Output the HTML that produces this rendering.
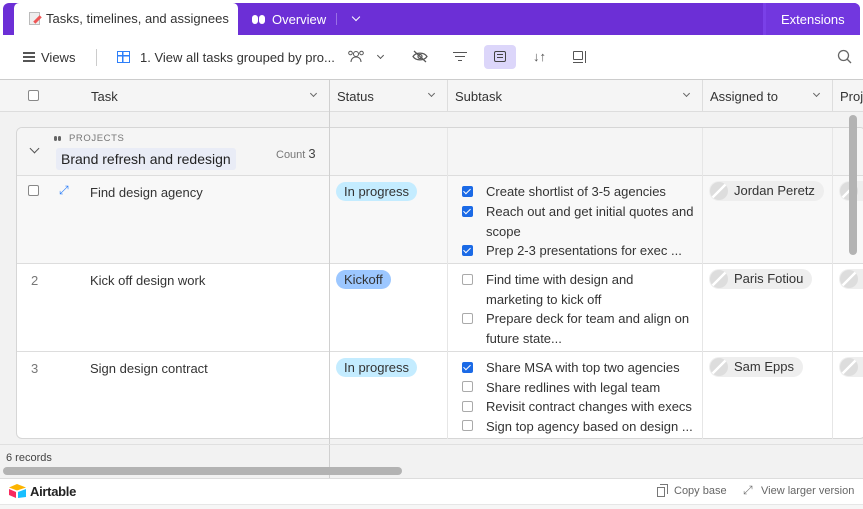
<!DOCTYPE html>
<html><head><style>
*{box-sizing:border-box;margin:0;padding:0}
body{width:863px;height:509px;overflow:hidden;background:#fff;font-family:"Liberation Sans",sans-serif;font-size:13px;color:#333;position:relative}
.a{position:absolute}
.t{white-space:nowrap}
.cb{position:absolute;width:11px;height:11px;border:1px solid #888;border-radius:2px;background:#fff}
.ck{position:absolute;width:11px;height:11px;border-radius:2px;background:#1b6ae6}
.ck:after{content:"";position:absolute;left:3px;top:1px;width:3px;height:6px;border:solid #fff;border-width:0 1.6px 1.6px 0;transform:rotate(45deg)}
.pill{position:absolute;height:19px;border-radius:10px;padding:0 8px;line-height:19px;font-size:13px}
.av{position:absolute;height:20px;border-radius:10px;background:#eee;padding-left:25px;padding-right:9px;line-height:20px;font-size:13px;color:#333}
.av:before{content:"";position:absolute;left:1px;top:1px;width:18px;height:18px;border-radius:50%;background:linear-gradient(135deg,#ddd 45%,#fff 45%,#fff 55%,#ddd 55%)}
.vl{position:absolute;width:1px;background:#ddd}
.hl{position:absolute;height:1px;background:#ddd}
.st{position:absolute;left:486px;line-height:19.5px;color:#333}
</style></head><body>
<!-- top bar -->
<div class="a" style="left:3px;top:3px;width:857px;height:32px;background:#6c2fd6;border-radius:6px 6px 0 0"></div>
<div class="a" style="left:763px;top:3px;width:97px;height:32px;background:#7237df;border-radius:0 6px 0 0;border-left:3px solid #7a40e8"></div>
<div class="a t" style="left:781px;top:12px;color:#fff;font-size:13px">Extensions</div>
<div class="a" style="left:14px;top:3px;width:224px;height:32px;background:#fff;border-radius:5px 5px 0 0"></div>
<div class="a" style="left:29px;top:12px;width:11px;height:13px;background:#eee;border:1px solid #bbb"></div>
<div class="a" style="left:33px;top:18px;width:9px;height:3px;background:#e55;transform:rotate(-45deg)"></div>
<div class="a t" style="left:46px;top:11px;color:#333;font-size:13px">Tasks, timelines, and assignees</div>
<div class="a" style="left:252px;top:15px;width:6px;height:9px;border-radius:3px;background:#fff"></div>
<div class="a" style="left:259px;top:15px;width:6px;height:9px;border-radius:3px;background:#fff"></div>
<div class="a t" style="left:272px;top:12px;color:#fff;font-size:13px">Overview</div>
<div class="a" style="left:336px;top:13px;width:1px;height:12px;background:#9a70e6"></div>
<div class="a" style="left:353px;top:14px;width:6px;height:6px;border:solid #fff;border-width:0 1px 1px 0;transform:rotate(45deg)"></div>
<!-- toolbar -->
<div class="a" style="left:23px;top:52px;width:12px;height:2px;background:#555;box-shadow:0 4px 0 #555,0 8px 0 #555"></div>
<div class="a t" style="left:41px;top:50px;font-size:13px;color:#333">Views</div>
<div class="a" style="left:96px;top:49px;width:1px;height:17px;background:#ccc"></div>
<div class="a" style="left:117px;top:51px;width:13px;height:12px;border:1.5px solid #2d7ff9;background:linear-gradient(#2d7ff9,#2d7ff9) 0 3px/100% 1.5px no-repeat,linear-gradient(#2d7ff9,#2d7ff9) 4px 0/1.5px 100% no-repeat"></div>
<div class="a t" style="left:140px;top:50px;font-size:13px;color:#333">1. View all tasks grouped by pro...</div>
<svg class="a" style="left:347px;top:49px" width="18" height="14" fill="none" stroke="#555" stroke-width="1"><circle cx="9" cy="5" r="2.5"/><path d="M4 13c0-3 2-5 5-5s5 2 5 5"/><circle cx="3.5" cy="4" r="1.8"/><circle cx="14.5" cy="4" r="1.8"/></svg>
<div class="a" style="left:378px;top:53px;width:5px;height:5px;border:solid #555;border-width:0 1px 1px 0;transform:rotate(45deg)"></div>
<svg class="a" style="left:412px;top:50px" width="16" height="13" fill="none" stroke="#555" stroke-width="1.2"><path d="M1 6.5C4 2 12 2 15 6.5C12 11 4 11 1 6.5z"/><circle cx="8" cy="6.5" r="2"/><path d="M2 1l12 11"/></svg>
<div class="a" style="left:453px;top:52px;width:14px;height:1.3px;background:#555"></div>
<div class="a" style="left:455px;top:56px;width:10px;height:1.3px;background:#555"></div>
<div class="a" style="left:458px;top:60px;width:4px;height:1.3px;background:#555"></div>
<div class="a" style="left:484px;top:45px;width:32px;height:24px;background:#dcd6fa;border-radius:4px"></div>
<div class="a" style="left:494px;top:51px;width:12px;height:11px;border:1.2px solid #444;border-radius:2px"></div>
<div class="a" style="left:497px;top:54px;width:6px;height:1px;background:#444;box-shadow:0 3px 0 #444"></div>
<div class="a t" style="left:533px;top:49px;font-size:13px;color:#555">↓↑</div>
<div class="a" style="left:573px;top:51px;width:10px;height:9px;border:1.2px solid #555;border-radius:1px"></div>
<div class="a" style="left:573px;top:62px;width:10px;height:1.2px;background:#555"></div>
<div class="a" style="left:585px;top:51px;width:1.2px;height:12px;background:#555"></div>
<svg class="a" style="left:837px;top:49px" width="15" height="15" fill="none" stroke="#666" stroke-width="1.3"><circle cx="6.5" cy="6.5" r="5"/><path d="M10 10l4 4"/></svg>
<div class="hl" style="left:0;top:79px;width:863px;background:#ccc"></div>
<!-- grid bg -->
<div class="a" style="left:0;top:80px;width:863px;height:398px;background:#f2f2f2"></div>
<!-- header -->
<div class="a" style="left:0;top:80px;width:863px;height:31px;background:#f5f5f5"></div>
<div class="hl" style="left:0;top:111px;width:863px"></div>
<div class="cb" style="left:28px;top:90px"></div>
<div class="a t" style="left:91px;top:89px">Task</div>
<div class="a t" style="left:337px;top:89px">Status</div>
<div class="a t" style="left:455px;top:89px">Subtask</div>
<div class="a t" style="left:710px;top:89px">Assigned to</div>
<div class="a t" style="left:840px;top:89px">Proj</div>
<div class="a" style="left:311px;top:91px;width:5px;height:5px;border:solid #666;border-width:0 1px 1px 0;transform:rotate(45deg)"></div>
<div class="a" style="left:429px;top:91px;width:5px;height:5px;border:solid #666;border-width:0 1px 1px 0;transform:rotate(45deg)"></div>
<div class="a" style="left:684px;top:91px;width:5px;height:5px;border:solid #666;border-width:0 1px 1px 0;transform:rotate(45deg)"></div>
<div class="a" style="left:814px;top:91px;width:5px;height:5px;border:solid #666;border-width:0 1px 1px 0;transform:rotate(45deg)"></div>
<div class="vl" style="left:447px;top:80px;height:31px"></div>
<div class="vl" style="left:702px;top:80px;height:31px"></div>
<div class="vl" style="left:832px;top:80px;height:31px"></div>
<!-- group -->
<div class="a" style="left:16px;top:127px;width:850px;height:312px;background:#fff;border:1px solid #d6d6d6;border-radius:6px;overflow:hidden">
 <div class="a" style="left:0;top:0;width:850px;height:48px;background:#f5f5f5"></div>
 <div class="a" style="left:0;top:48px;width:850px;height:88px;background:#f8f8f8"></div>
</div>
<div class="hl" style="left:17px;top:175px;width:846px"></div>
<div class="hl" style="left:17px;top:263px;width:846px"></div>
<div class="hl" style="left:17px;top:351px;width:846px"></div>
<div class="vl" style="left:447px;top:128px;height:311px;background:#e6e6e6"></div>
<div class="vl" style="left:702px;top:128px;height:311px;background:#e6e6e6"></div>
<div class="vl" style="left:832px;top:128px;height:311px;background:#e6e6e6"></div>
<div class="a" style="left:31px;top:145px;width:7px;height:7px;border:solid #555;border-width:0 1.2px 1.2px 0;transform:rotate(45deg)"></div>
<div class="a" style="left:54px;top:136px;width:3px;height:5px;border-radius:2px;background:#666;box-shadow:4px 0 0 #666"></div>
<div class="a t" style="left:69px;top:133px;font-size:9.5px;letter-spacing:.6px;color:#777">PROJECTS</div>
<div class="a t" style="left:56px;top:148px;height:22px;padding:0 5px;line-height:22px;background:#e9ecf6;border-radius:3px;font-size:14px;color:#222">Brand refresh and redesign</div>
<div class="a t" style="left:276px;top:146px;font-size:11px;color:#777">Count <span style="font-size:13px;color:#444">3</span></div>
<!-- rows -->
<div class="cb" style="left:28px;top:185px"></div>
<div class="a t" style="left:59px;top:183px;font-size:12px;color:#2d7ff9">⤢</div>
<div class="a t" style="left:90px;top:185px">Find design agency</div>
<div class="pill t" style="left:336px;top:182px;background:#c4ecff">In progress</div>
<div class="a t" style="left:31px;top:273px;color:#777">2</div>
<div class="a t" style="left:90px;top:273px">Kick off design work</div>
<div class="pill t" style="left:336px;top:270px;background:#9cc7ff">Kickoff</div>
<div class="a t" style="left:31px;top:361px;color:#777">3</div>
<div class="a t" style="left:90px;top:361px">Sign design contract</div>
<div class="pill t" style="left:336px;top:358px;background:#c4ecff">In progress</div>
<!-- subtasks -->
<div class="ck" style="left:462px;top:186px"></div><div class="st t" style="top:182px">Create shortlist of 3-5 agencies</div>
<div class="ck" style="left:462px;top:206px"></div><div class="st t" style="top:202px">Reach out and get initial quotes and<br>scope</div>
<div class="ck" style="left:462px;top:245px"></div><div class="st t" style="top:241px">Prep 2-3 presentations for exec ...</div>
<div class="cb" style="left:462px;top:274px;border-color:#aaa"></div><div class="st t" style="top:270px">Find time with design and<br>marketing to kick off</div>
<div class="cb" style="left:462px;top:313px;border-color:#aaa"></div><div class="st t" style="top:309px">Prepare deck for team and align on<br>future state...</div>
<div class="ck" style="left:462px;top:362px"></div><div class="st t" style="top:358px">Share MSA with top two agencies</div>
<div class="cb" style="left:462px;top:381px;border-color:#aaa"></div><div class="st t" style="top:378px">Share redlines with legal team</div>
<div class="cb" style="left:462px;top:401px;border-color:#aaa"></div><div class="st t" style="top:397px">Revisit contract changes with execs</div>
<div class="cb" style="left:462px;top:420px;border-color:#aaa"></div><div class="st t" style="top:417px">Sign top agency based on design ...</div>
<div class="av t" style="left:709px;top:181px">Jordan Peretz</div>
<div class="av t" style="left:709px;top:269px">Paris Fotiou</div>
<div class="av t" style="left:709px;top:357px">Sam Epps</div>
<div class="av" style="left:839px;top:181px"></div>
<div class="av" style="left:839px;top:269px"></div>
<div class="av" style="left:839px;top:357px"></div>
<!-- vertical scrollbar -->
<div class="a" style="left:849px;top:115px;width:8px;height:140px;border-radius:4px;background:#b3b3b3"></div>
<!-- main column line -->
<div class="vl" style="left:329px;top:80px;height:398px;background:#d0d0d0"></div>
<!-- footer -->
<div class="hl" style="left:0;top:444px;width:863px;background:#e0e0e0"></div>
<div class="a t" style="left:6px;top:452px;font-size:11px;color:#444">6 records</div>
<div class="a" style="left:3px;top:467px;width:399px;height:8px;border-radius:4px;background:#b3b3b3"></div>
<div class="hl" style="left:0;top:478px;width:863px;background:#ddd"></div>
<!-- bottom bar -->
<svg class="a" style="left:9px;top:484px" width="18" height="14"><path d="M8 0L17 3.5 8 6.5 0 3.5z" fill="#fcb400"/><path d="M9 8l8-3v8l-8 1z" fill="#18bfff"/><path d="M0 5l7 3v6L0 11z" fill="#f82b60"/></svg>
<div class="a t" style="left:30px;top:484px;font-size:13px;font-weight:bold;color:#222;letter-spacing:-.3px">Airtable</div>
<div class="a" style="left:657px;top:487px;width:8px;height:10px;border:1px solid #777"></div>
<div class="a" style="left:660px;top:484px;width:8px;height:10px;border:1px solid #777;border-left:0;border-bottom:0"></div>
<div class="a t" style="left:674px;top:485px;font-size:11px;color:#666">Copy base</div>
<div class="a t" style="left:743px;top:483px;font-size:12px;color:#777">⤢</div>
<div class="a t" style="left:761px;top:485px;font-size:11px;color:#666">View larger version</div>
<div class="hl" style="left:0;top:504px;width:863px;background:#e6e6e6"></div>
<div class="a" style="left:0;top:505px;width:863px;height:4px;background:#f6f6f6"></div>
</body></html>
